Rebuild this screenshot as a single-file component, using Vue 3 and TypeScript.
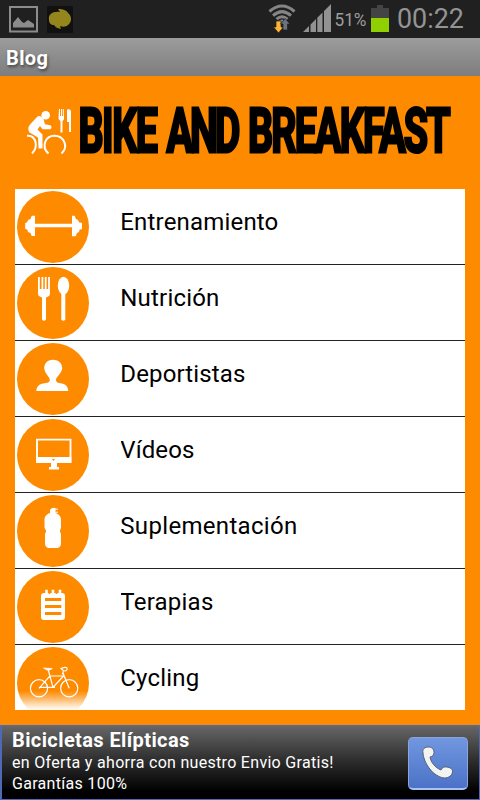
<script setup lang="ts">
interface Entry {
  id: string
  label: string
  width: number
}

const entries: Entry[] = [
  { id: 'training', label: 'Entrenamiento', width: 158 },
  { id: 'nutrition', label: 'Nutrición', width: 99 },
  { id: 'athletes', label: 'Deportistas', width: 125 },
  { id: 'videos', label: 'Vídeos', width: 74 },
  { id: 'supplements', label: 'Suplementación', width: 177 },
  { id: 'therapies', label: 'Terapias', width: 93 },
  { id: 'cycling', label: 'Cycling', width: 79 },
]
</script>

<template>
  <div class="screen">
    <header class="status">
      <svg class="picture" width="29" height="27" viewBox="0 0 29 27">
        <rect x="1" y="1" width="27" height="24.500" fill="none" stroke="#8c8c8c" stroke-width="2" />
        <path d="M4 21.500V17l5-6 4 5 2 1 4-3 6 4v3.500z" fill="#8c8c8c" />
      </svg>
      <svg class="app" width="26" height="27" viewBox="0 0 26 27">
        <rect width="26" height="27" rx="1" fill="#111" />
        <path d="M2 14C1 8 6 5 13 6l-2-3c6 0 9 2 10 4 4 3 4 9 0 12-2 2-5 2-8 1l1 3C10 22 8 21 7 19 4 19 2 17 2 14z" fill="#94861c" />
      </svg>
      <span class="space"></span>
      <svg class="wifi" width="28" height="30" viewBox="0 0 28 30">
        <g fill="none" stroke="#858585" stroke-width="3">
          <path d="M1.500 7.500Q14-3.500 26.500 7.500M5 11.700Q14 3.500 23 11.700M8.500 15.200Q14 10.300 19.500 15.200" />
        </g>
        <path d="M10.500 17Q14 14 17.500 17L14 19.500z" fill="#858585" />
        <path d="M8 17h5v6h2.500L10.500 29 5.500 23H8z" fill="#ffb233" stroke="#202020" stroke-width=".7" />
        <path d="M15 26v-6h-2.500L17.200 14.500 22 20h-2.500v6z" fill="#6a7480" stroke="#202020" stroke-width=".7" />
      </svg>
      <svg class="signal" width="28" height="28" viewBox="0 0 28 28" fill="#929292">
        <path d="M0 28L6 22V28zM7.500 28V20.500L13 15V28zM14.300 28V13.700L19.500 8.500V28zM21 28V7L28 0V28z" />
      </svg>
      <svg class="percent" width="32" height="20" viewBox="0 0 32 20">
        <text x="-.500" y="16" font-size="17.500" textLength="32" lengthAdjust="spacingAndGlyphs">51%</text>
      </svg>
      <svg class="battery" width="18" height="27" viewBox="0 0 18 27">
        <path d="M6 0h6v3h6v10H0V3h6z" fill="#444" />
        <path d="M0 13h18v14H0z" fill="#91d000" />
      </svg>
      <svg class="clock" width="67" height="30" viewBox="0 0 67 30">
        <text x="0" y="24" font-size="27" textLength="67" lengthAdjust="spacingAndGlyphs">00:22</text>
      </svg>
    </header>

    <div class="titlebar">Blog</div>

    <main>
      <svg class="brand" width="480" height="113" viewBox="0 76 480 113">
        <g fill="#fff">
          <circle cx="45.700" cy="115.200" r="4.300" />
          <path d="M36.500 117.500Q40 114 43.500 119L45 124.200 50.500 125.200Q52.500 127.200 50.500 129.300L42.500 129.300 40 126 37.500 129.500 42.500 134.500 42.500 148.500H38.500L38 137.500 29.500 132.500Q27 128.500 30 124.500z" />
          <path d="M59 109h1v7h1v-7h1.200v7h1v-7H64v9.500q0 1.500-1.500 2.500v11.500h-2V121Q58.500 120 58.500 118z" />
          <path d="M67 109.500q4-1 4 2v20.500h-2V122H67z" />
        </g>
        <g fill="none" stroke="#fff" stroke-width="2">
          <path d="M27 135.800C36.500 135 38.500 147.500 32 153.500M48.500 153.500C41 147 45 135.800 54.500 135.800S69 147 61.500 153.500" />
        </g>
        <g class="logotype">
          <text class="bike" transform="translate(78.400 152) scale(.64 1)">BIKE</text>
          <text class="and" transform="translate(166.500 152) scale(.64 1)">AND</text>
          <text class="breakfast" transform="translate(248 152) scale(.64 1)">BREAKFAST</text>
        </g>
      </svg>

      <ul class="list">
        <li v-for="entry in entries" :key="entry.id" class="row">
          <svg class="icon" width="76" height="75" viewBox="0 0 76 75">
            <circle cx="38" cy="38" r="36" fill="#fe8a00" />
            <path
              v-if="entry.id === 'training'"
              fill="#fff"
              d="M10.200 34l2-.7.800-2.300 2.500-1 1.200-3.300H20v8h37v-8h2.700l1.300 3.300 2 1 1 2.300 3 .7v6l-2.500.8-.5 2.200-2 1-1.300 3.300H57V38.300H20V47h-3.300l-1.200-3-2.500-1-.8-2.500-2-.5z"
            />
            <g v-else-if="entry.id === 'nutrition'" fill="#fff">
              <path d="M23 12h1.800v12h1.700V12h1.800v12h1.500V12h1.800v12h1.500V12h1.800v17q0 2.500-3.900 3.400V54.500q-2 2.500-4 0V32.400q-4-.9-4-3.400z" />
              <ellipse cx="48.500" cy="20.700" rx="5.700" ry="9" />
              <path d="M46.300 27h4v27.500q-2 2.500-4 0z" />
            </g>
            <path
              v-else-if="entry.id === 'athletes'"
              fill="#fff"
              d="M38 18.700c6 0 9.500 4 9.200 9C45.500 34 41 36 41 38.500c0 4 3.500 3.500 7 4.200 3.500 1 5.200 4 5.300 7.300h-32c0-3.500 2-6.300 5.500-7.300 3.500-.7 8-.2 8-4.200 0-2.500-4-4.500-5.600-10.800C29 22.700 32 18.700 38 18.700z"
            />
            <g v-else-if="entry.id === 'videos'">
              <path d="M22 22.600h33.500V45H22z" fill="none" stroke="#fff" stroke-width="1.900" />
              <path d="M21 40h35.300v6H42v4h2v2.500H34V50h2v-4H21z" fill="#fff" />
              <path d="M37 42h3l-1.500 2z" fill="#fe8a00" />
            </g>
            <g v-else-if="entry.id === 'supplements'">
              <path d="M35 17q2-3 5.500-2v5c4 1.500 5.500 3.500 5.500 7v7c0 2-1 2.500-1 4s1 2 1 4v8c0 3.500-1.500 5-5 5h-6c-3.500 0-5-1.500-5-5v-8c0-2 1-2.500 1-4s-1.500-2-1.500-4v-7c0-3 1.500-5.500 5.500-7z" fill="#fff" />
              <path d="M40 16.200h3M40 19.200h3" stroke="#fff" stroke-width="1" />
            </g>
            <g v-else-if="entry.id === 'therapies'">
              <rect x="26" y="24" width="24" height="27" rx="3" fill="#fff" />
              <path d="M31.500 20.700v5M38 20.700v5M45 20.700v5" stroke="#fff" stroke-width="2.600" />
              <path d="M30 30.500h16.300M30 37.400h16.300M30 44.500h16.300" stroke="#fe8a00" stroke-width="3" />
              <path d="M34.500 22v3M41.500 22v3" stroke="#fe8a00" stroke-width="1.500" />
            </g>
            <g v-else fill="none" stroke="#fff" stroke-width="1.200">
              <circle cx="24" cy="43.300" r="8.600" />
              <circle cx="54.200" cy="43.300" r="8.600" />
              <path d="M24 43.300L34.800 31H48.500L38 42.300H24M33 24l5 18.300M47 29q1.500-1 1.300-3.500L46 23.500q6-2.500 6.200.3-.2 2.500-3 2M48 28l6.200 15.300M36 42.300h4" />
              <path d="M28.500 23l8.800.6-3.500 1.800q-2 0-5.300-2.400z" fill="#fff" stroke-width=".7" />
            </g>
          </svg>
          <svg class="label" width="220" height="36" viewBox="0 0 220 36">
            <text x="-.7" y="26" :textLength="entry.width">{{ entry.label }}</text>
          </svg>
        </li>
      </ul>
    </main>

    <footer class="ad">
      <div class="copy">
        <strong>Bicicletas Elípticas</strong>
        <span>en Oferta y ahorra con nuestro Envio Gratis!</span>
        <span>Garantías 100%</span>
      </div>
      <div class="call">
        <svg width="38" height="40" viewBox="0 0 38 40">
          <path class="handset" d="M4 10C3 6 6 4 9 4c4 0 6 2 6 5.500 0 2.500-1.500 4-4 4.500 1 5.500 5 10.500 11 13 1-2.500 3-3.500 5.500-3 4 .3 6.500 2.500 6 5-.5 3.500-4 6-8 6-4-.2-9-3-13-7C8 23 4.500 16.500 4 10z" />
        </svg>
      </div>
    </footer>
  </div>
</template>

<style>
body {
  margin: 0;
  background: #fe8a00;
}
</style>

<style scoped>
.screen {
  width: 480px;
  height: 800px;
  display: flex;
  flex-direction: column;
  overflow: hidden;
  background: #fe8a00;
  font-family: Roboto, "Liberation Sans", sans-serif;
}
svg {
  display: block;
  flex: none;
}
.status {
  height: 38px;
  flex: none;
  box-sizing: border-box;
  padding: 0 16px 0 9px;
  display: flex;
  align-items: flex-start;
  background: #202020;
}
.picture {
  margin-top: 6px;
}
.app {
  margin: 6px 0 0 9px;
}
.space {
  flex: 1;
}
.wifi {
  margin: 4px 7px 0 0;
}
.signal {
  margin: 4px 4px 0 0;
}
.percent {
  margin: 10px 4px 0 0;
  fill: #9d9d9d;
}
.battery {
  margin: 5px 8px 0 0;
}
.clock {
  margin-top: 4px;
  fill: #949494;
}
.titlebar {
  height: 38px;
  flex: none;
  box-sizing: border-box;
  padding: 1px 0 0 6px;
  background: linear-gradient(#9c9c9c, #7d7d7d);
  color: #fff;
  font-size: 20px;
  font-weight: 700;
  letter-spacing: 0.4px;
  line-height: 38px;
  text-shadow: 1px 2px 3px #444;
}
main {
  height: 649px;
  flex: none;
}
.logotype {
  font-size: 61.5px;
  font-weight: 700;
  fill: #000;
}
.logotype text {
  stroke: #000;
  stroke-width: 3px;
}
.bike {
  letter-spacing: -2.2px;
}
.and {
  letter-spacing: -4.6px;
}
.breakfast {
  letter-spacing: -2.8px;
}
.list {
  list-style: none;
  width: 450px;
  height: 521px;
  margin: 0 15px;
  padding: 0;
  overflow: hidden;
  background: #fff;
}
.row {
  height: 75px;
  display: flex;
  border-bottom: 1px solid #222;
}
.row:last-child {
  height: 65px;
  overflow: hidden;
  border: 0;
}
.row:last-child .icon {
  mask-image: linear-gradient(#000 46px, transparent 65px);
}
.label {
  margin: 15px 0 0 30px;
  font-size: 24px;
  fill: #000;
}
.ad {
  height: 75px;
  flex: none;
  box-sizing: border-box;
  display: flex;
  justify-content: space-between;
  padding: 3px 11px 0 10px;
  border: solid #5069b5;
  border-width: 1px 1px 1px 2px;
  background: linear-gradient(#666, #303030 45%, #000 90%);
}
.copy {
  display: flex;
  flex-direction: column;
  color: #fff;
  font-size: 16px;
  letter-spacing: 0.3px;
  line-height: 21px;
  white-space: nowrap;
}
.copy strong {
  font-size: 20px;
  letter-spacing: 0.4px;
  line-height: 23px;
}
.call {
  width: 60px;
  height: 53px;
  box-sizing: border-box;
  margin-top: 8px;
  display: flex;
  align-items: center;
  justify-content: center;
  border: 1px solid #8ba4dc;
  border-bottom: 2px solid #a9c1f3;
  border-radius: 5px;
  background: linear-gradient(#7197e0, #4b72c7);
}
.handset {
  fill: #f3f3f0;
  stroke: #536080;
  stroke-width: 1px;
}
</style>
